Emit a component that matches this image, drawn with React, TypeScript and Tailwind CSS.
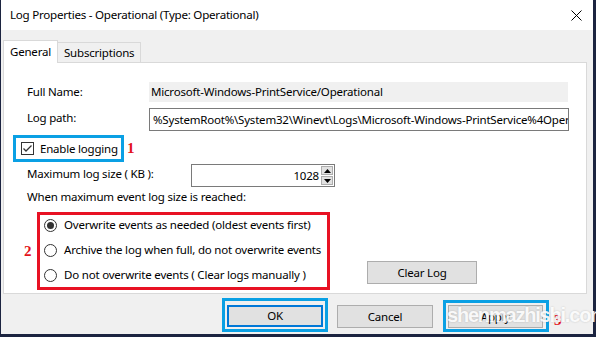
function CloseIcon() {
  return (
    <svg width="11" height="11" viewBox="0 0 11 11" className="block">
      <path d="M0.5 0.5 L10.5 10.5 M10.5 0.5 L0.5 10.5" stroke="#000" strokeWidth="1" fill="none" />
    </svg>
  );
}

function Radio({ checked }: { checked?: boolean }) {
  return (
    <div className="w-[13px] h-[13px] rounded-full border border-[#333] bg-white flex items-center justify-center shrink-0">
      {checked && <div className="w-[7px] h-[7px] rounded-full bg-[#333]" />}
    </div>
  );
}

function Button({ label, className = "" }: { label: string; className?: string }) {
  return (
    <div className={`bg-[#e1e1e1] border border-[#adadad] flex items-center justify-center ${className}`}>
      {label}
    </div>
  );
}

export default function App() {
  return (
    <div className="w-[596px] h-[337px] overflow-hidden bg-[#1c2440] pl-px pr-[3px] pb-[3px] font-['Noto_Sans',sans-serif] text-[11.5px] tracking-[-0.2px] leading-none text-black whitespace-nowrap">
      <div className="relative w-full h-full bg-[#f0f0f0] flex flex-col">
        {/* title bar */}
        <div className="h-[30px] shrink-0 bg-white flex items-center justify-between pl-[9px] pr-[11px]">
          <span className="text-[11.6px] tracking-[-0.25px]">Log Properties - Operational (Type: Operational)</span>
          <CloseIcon />
        </div>

        {/* tabs */}
        <div className="mt-[10px] h-[22px] flex items-end pl-[2px] relative z-10">
          <div className="h-[23px] -mb-px bg-white border border-b-0 border-[#d9d9d9] px-[6px] flex items-center">General</div>
          <div className="h-[20px] border border-l-0 border-b-0 border-[#d9d9d9] px-[6px] flex items-center">Subscriptions</div>
        </div>

        {/* panel */}
        <div className="ml-[2px] mr-[6px] h-[232px] bg-white border border-[#d9d9d9] flex flex-col pl-[23px]">
          <div className="mt-[19px] h-[20px] flex items-center">
            <div className="w-[122px]">Full Name:</div>
            <div className="w-[419px] h-full bg-[#f0f0f0] flex items-center pl-[2px]">Microsoft-Windows-PrintService/Operational</div>
          </div>

          <div className="mt-[6px] h-[23px] flex items-center">
            <div className="w-[122px] -mt-[4px]">Log path:</div>
            <div className="w-[420px] h-full border border-[#7a7a7a] flex items-center pl-[3px] overflow-hidden">
              %SystemRoot%\System32\Winevt\Logs\Microsoft-Windows-PrintService%4Operational.evtx
            </div>
          </div>

          <div className="mt-[4px] h-[27px] flex items-center -ml-[14px]">
            <div className="w-[111px] h-full border-[3px] border-[#0aa0e4] flex items-center pl-[5px] gap-[6px]">
              <div className="w-[13px] h-[13px] border border-[#333] bg-white flex items-center justify-center shrink-0">
                <svg width="11" height="11" viewBox="0 0 11 11">
                  <path d="M1.5 5.5 L4 8 L9.5 2.5" stroke="#333" strokeWidth="1.3" fill="none" />
                </svg>
              </div>
              <span>Enable logging</span>
            </div>
            <span className="ml-[3px] font-['Liberation_Serif',serif] font-bold text-[15px] text-[#e3121c]">1</span>
          </div>

          <div className="mt-[2px] h-[23px] flex items-center">
            <div className="w-[164px] -mt-[4px]">Maximum log size ( KB ):</div>
            <div className="w-[144px] h-full border border-[#7a7a7a] flex items-center">
              <div className="flex-1 text-right pr-[1px]">1028</div>
              <div className="w-[14px] h-full flex flex-col gap-px p-px">
                <div className="flex-1 bg-[#e1e1e1] border border-[#adadad] flex items-center justify-center">
                  <svg width="7" height="4" viewBox="0 0 7 4"><path d="M0 4 L3.5 0 L7 4 Z" fill="#000" /></svg>
                </div>
                <div className="flex-1 bg-[#e1e1e1] border border-[#adadad] flex items-center justify-center">
                  <svg width="7" height="4" viewBox="0 0 7 4"><path d="M0 0 L3.5 4 L7 0 Z" fill="#000" /></svg>
                </div>
              </div>
            </div>
          </div>

          <div className="mt-px h-[18px] flex items-center">When maximum event log size is reached:</div>

          <div className="mt-[6px] flex items-end -ml-[3px]">
            <div className="w-[13px] h-[78px] flex items-center">
              <span className="font-['Liberation_Serif',serif] font-bold text-[15px] text-[#e3121c]">2</span>
            </div>
            <div className="w-[293px] h-[78px] border-[3px] border-[#e81123] flex flex-col gap-[5px] pl-[4px]">
              <div className="h-[20px] flex items-center gap-[7px]">
                <Radio checked />
                <span>Overwrite events as needed (oldest events first)</span>
              </div>
              <div className="h-[20px] flex items-center gap-[7px]">
                <Radio />
                <span>Archive the log when full, do not overwrite events</span>
              </div>
              <div className="h-[20px] flex items-center gap-[7px]">
                <Radio />
                <span>Do not overwrite events ( Clear logs manually )</span>
              </div>
            </div>
            <Button label="Clear Log" className="ml-[37px] mb-[6px] w-[110px] h-[23px]" />
          </div>
        </div>

        {/* bottom buttons */}
        <div className="mt-[4px] flex items-start pl-[221px]">
          <div className="w-[106px] h-[34px] border-[3px] border-[#0aa0e4] pt-[4px] pl-[2px]">
            <div className="w-[96px] h-[22px] bg-[#e1e1e1] border-2 border-[#0078d7] flex items-center justify-center">OK</div>
          </div>
          <Button label="Cancel" className="ml-[9px] mt-[7px] w-[96px] h-[23px]" />
          <div className="ml-[10px] mt-[2px] w-[106px] h-[32px] border-[3px] border-[#0aa0e4] pt-[2px] pl-[2px]">
            <Button label="Apply" className="w-[95px] h-[23px]" />
          </div>
        </div>

        {/* watermark */}
        <span className="absolute left-[553px] top-[313px] font-['Liberation_Serif',serif] font-bold text-[15px] text-[#e3121c]">3</span>
        <span className="absolute left-[446px] top-[305px] font-['Liberation_Sans',sans-serif] font-bold text-[20px] tracking-[-1.2px] text-white/90 [text-shadow:0_0_2px_rgba(0,0,0,0.2)]">
          shenmazhishi.com
        </span>
      </div>
    </div>
  );
}
